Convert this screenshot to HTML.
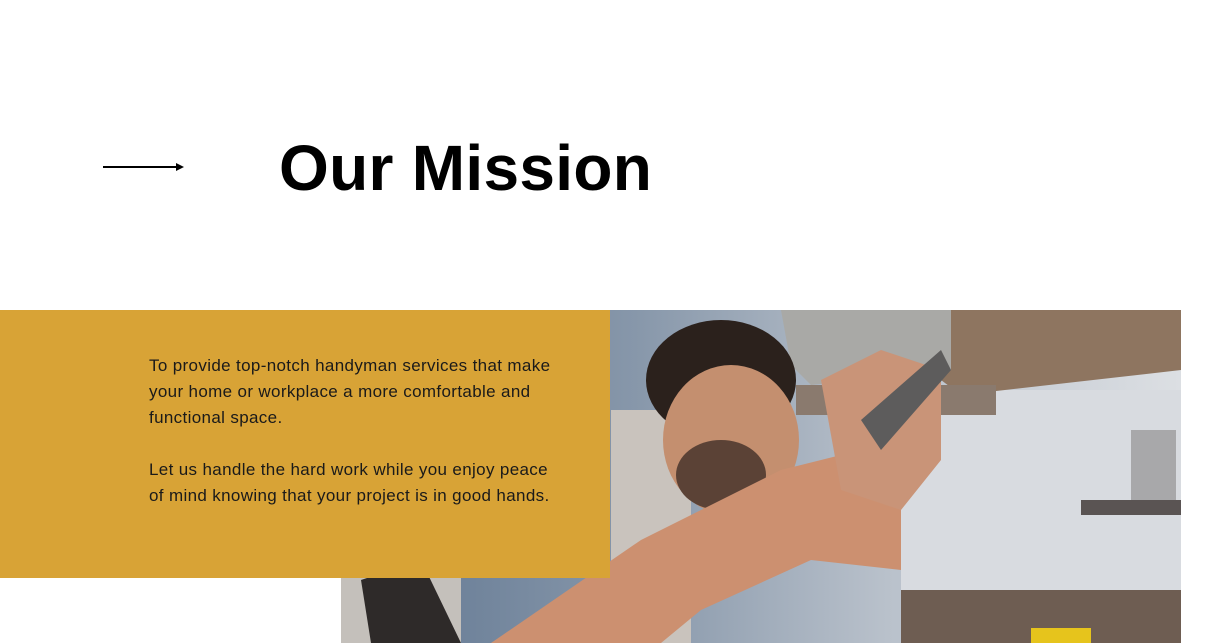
<!DOCTYPE html>
<html><head><style>
html,body{margin:0;padding:0;background:#fff;}
body{width:1220px;height:643px;position:relative;overflow:hidden;font-family:"Liberation Sans",sans-serif;}
.arrow{position:absolute;left:103px;top:166px;width:78px;height:2px;background:#000;}
.arrowhead{position:absolute;left:176px;top:163px;width:0;height:0;border-left:8px solid #000;border-top:4px solid transparent;border-bottom:4px solid transparent;}
h1{position:absolute;left:279px;top:128px;margin:0;font-size:64px;font-weight:700;letter-spacing:0.3px;color:#000;line-height:80px;}
.photo{position:absolute;left:341px;top:310px;width:840px;height:333px;}
.box{position:absolute;left:0;top:310px;width:610px;height:268px;background:#D8A336;}
.txt{position:absolute;left:149px;top:353px;font-size:17px;line-height:26px;color:#1a1a1a;white-space:nowrap;letter-spacing:0.35px;}
.txt p{margin:0 0 26px 0;}
</style></head><body>
<div class="arrow"></div><div class="arrowhead"></div>
<h1>Our Mission</h1>
<svg class="photo" viewBox="0 0 840 333" xmlns="http://www.w3.org/2000/svg">
<defs>
<linearGradient id="bg" x1="0" x2="1"><stop offset="0" stop-color="#5f7590"/><stop offset="0.35" stop-color="#8797aa"/><stop offset="0.65" stop-color="#b9c1cb"/><stop offset="1" stop-color="#dcdfe3"/></linearGradient>
</defs>
<rect width="840" height="333" fill="url(#bg)"/>
<rect x="560" y="80" width="280" height="253" fill="#d8dbe0"/>
<rect x="560" y="280" width="280" height="53" fill="#6e5d52"/>
<polygon points="600,0 840,0 840,60 620,85 600,70" fill="#8e7560"/>
<polygon points="440,0 610,0 610,60 470,75 450,55" fill="#a9a9a6"/>
<rect x="455" y="75" width="200" height="30" fill="#8a7a6e"/>
<rect x="790" y="120" width="45" height="80" fill="#a8a8aa"/>
<rect x="740" y="190" width="100" height="15" fill="#5a5453"/>
<rect x="270" y="100" width="80" height="233" fill="#c9c3bd"/>
<rect x="0" y="250" width="120" height="83" fill="#c4c0bb"/>
<polygon points="20,270 80,250 120,333 30,333" fill="#2e2a29"/>
<ellipse cx="380" cy="70" rx="75" ry="60" fill="#2b211c"/>
<ellipse cx="390" cy="130" rx="68" ry="75" fill="#c48f6f"/>
<ellipse cx="380" cy="165" rx="45" ry="35" fill="#5b4236"/>
<polygon points="150,333 300,230 440,160 520,140 560,200 560,260 470,250 360,300 320,333" fill="#cc9070"/>
<polygon points="480,70 540,40 600,60 600,150 560,200 500,180" fill="#c99478"/>
<polygon points="520,110 600,40 610,60 540,140" fill="#5d5c5c"/>
<rect x="690" y="318" width="60" height="15" fill="#e6c41c"/>
</svg>
<div class="box"></div>
<div class="txt">
<p>To provide top-notch handyman services that make<br>your home or workplace a more comfortable and<br>functional space.</p>
<p>Let us handle the hard work while you enjoy peace<br>of mind knowing that your project is in good hands.</p>
</div>
</body></html>
